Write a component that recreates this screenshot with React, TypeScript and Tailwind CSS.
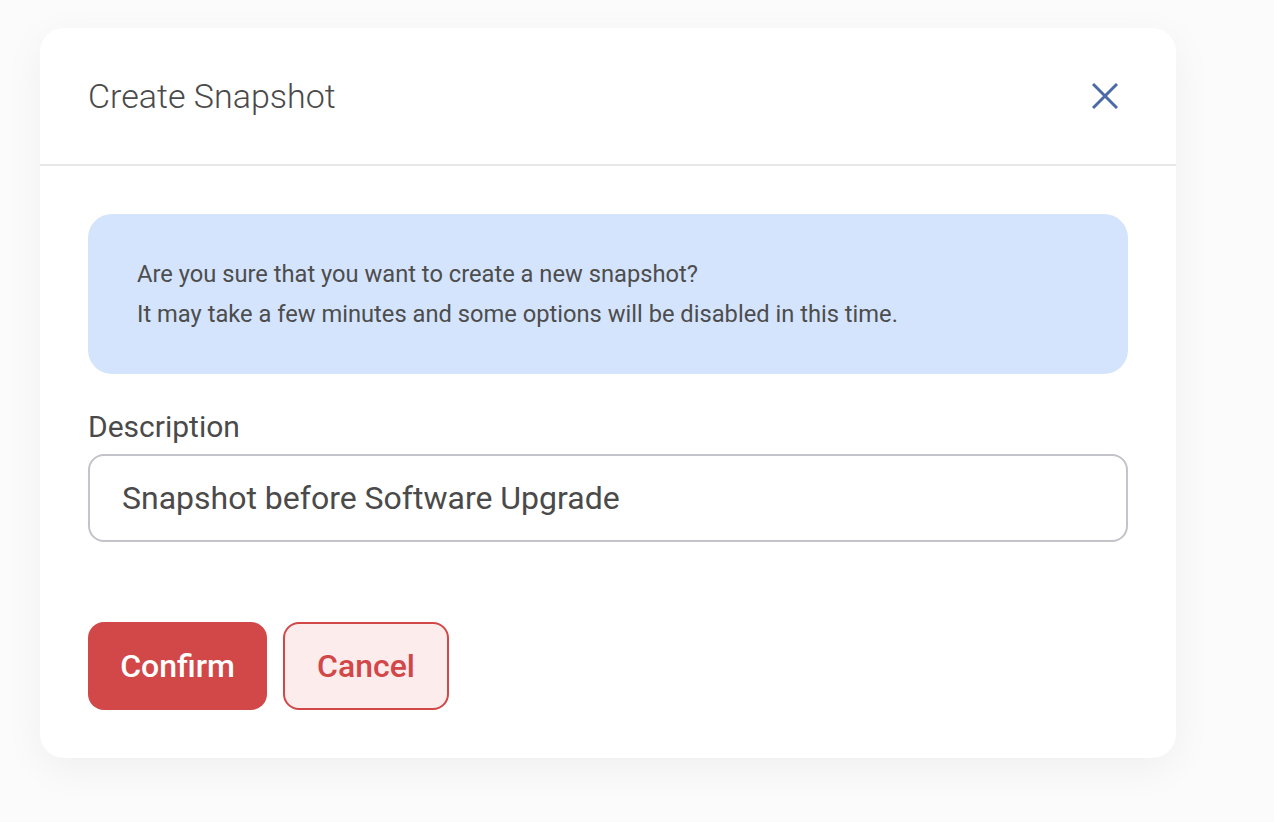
export default function App() {
  return (
    <div className="min-h-[822px] w-full bg-[#fbfbfc] pt-[28px] pl-[40px] font-['Roboto','Liberation_Sans',sans-serif] text-[#4a4a4a]">
      <div className="w-[1136px] h-[730px] bg-white rounded-[24px] shadow-[0_10px_40px_rgba(0,0,0,0.05)] flex flex-col">
        {/* Header */}
        <div className="h-[138px] flex items-center justify-between pl-[48px] pr-[58px] border-b-2 border-[#e8e8ea]">
          <h1 className="text-[34px] font-light text-[#4a4a4a]">Create Snapshot</h1>
          <button className="w-[26px] h-[26px] flex items-center justify-center text-[#4a6aa8]">
            <svg width="26" height="26" viewBox="0 0 26 26" fill="none" stroke="currentColor" strokeWidth="3">
              <path d="M1 1L25 25M25 1L1 25" />
            </svg>
          </button>
        </div>

        {/* Body */}
        <div className="px-[48px] pt-[48px] flex flex-col">
          <div className="h-[160px] rounded-[24px] bg-[#d4e4fc] pl-[49px] flex flex-col justify-center text-[23.7px] leading-[40px] text-[#4d4d4d]">
            <p>Are you sure that you want to create a new snapshot?</p>
            <p>It may take a few minutes and some options will be disabled in this time.</p>
          </div>

          <label className="mt-[34px] text-[30px] leading-[38px] text-[#4a4a4a]">Description</label>
          <input
            className="mt-[8px] h-[88px] w-full rounded-[16px] border-2 border-[#c3c4c9] px-[32px] text-[32px] text-[#4a4a4a] outline-none"
            defaultValue="Snapshot before Software Upgrade"
          />

          <div className="mt-[80px] flex gap-[16px]">
            <button className="h-[88px] w-[179px] rounded-[16px] bg-[#d24747] text-white text-[32px] font-medium">Confirm</button>
            <button className="h-[88px] w-[166px] rounded-[16px] bg-[#fdecec] border-2 border-[#d24747] text-[#d24747] text-[32px] font-medium">Cancel</button>
          </div>
        </div>
      </div>
    </div>
  );
}
